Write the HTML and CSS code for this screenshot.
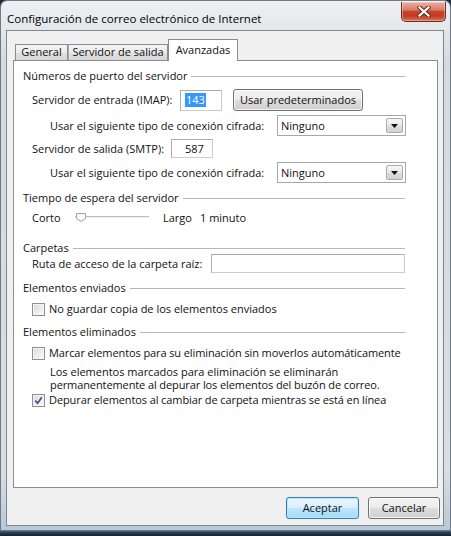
FILE: index.html
```html
<!DOCTYPE html>
<html lang="es">
<head>
<meta charset="utf-8">
<title>Configuración de correo electrónico de Internet</title>
<link rel="stylesheet" href="styles.css">
</head>
<body>
<div class="window">
  <div class="titlebar">
    <span class="title">Configuración de correo electrónico de Internet</span>
    <button class="close" aria-label="Cerrar">
      <svg width="14" height="11" viewBox="0 0 14 11">
        <path d="M2.5 1.5 L11.5 9.5 M11.5 1.5 L2.5 9.5" stroke="#6a2a20" stroke-width="4.2" stroke-linecap="square" fill="none"/>
        <path d="M2.5 1.5 L11.5 9.5 M11.5 1.5 L2.5 9.5" stroke="#ffffff" stroke-width="2.2" stroke-linecap="square" fill="none"/>
      </svg>
    </button>
  </div>
  <div class="client">
    <div class="tabs">
      <div class="tab tab-general">General</div>
      <div class="tab tab-salida">Servidor de salida</div>
      <div class="tab tab-avanzadas active">Avanzadas</div>
    </div>
    <div class="panel">
      <div class="group mt-9"><span>Números de puerto del servidor</span></div>
      <div class="row row-imap mt-7">
        <span class="label lbl-imap">Servidor de entrada (IMAP):</span>
        <span class="textbox port-imap"><span class="selected">143</span></span>
        <button class="btn btn-defaults">Usar predeterminados</button>
      </div>
      <div class="row sub row-combo mt-4">
        <span class="label">Usar el siguiente tipo de conexión cifrada:</span>
        <span class="combo">
          <span class="combo-value">Ninguno</span>
          <span class="combo-arrow">
            <svg width="7" height="4" viewBox="0 0 7 4"><path d="M0 0 H7 L3.5 4 Z" fill="#111"/></svg>
          </span>
        </span>
      </div>
      <div class="row row-smtp mt-3">
        <span class="label lbl-smtp">Servidor de salida (SMTP):</span>
        <span class="textbox port-smtp">587</span>
      </div>
      <div class="row sub row-combo mt-4">
        <span class="label">Usar el siguiente tipo de conexión cifrada:</span>
        <span class="combo">
          <span class="combo-value">Ninguno</span>
          <span class="combo-arrow">
            <svg width="7" height="4" viewBox="0 0 7 4"><path d="M0 0 H7 L3.5 4 Z" fill="#111"/></svg>
          </span>
        </span>
      </div>

      <div class="group mt-9"><span>Tiempo de espera del servidor</span></div>
      <div class="row row-slider mt-6">
        <span class="label lbl-corto">Corto</span>
        <span class="slider">
          <svg width="74" height="16" viewBox="0 0 74 16">
            <rect x="0" y="6" width="74" height="1" fill="#bdbdbd"/>
            <rect x="0" y="7" width="74" height="1" fill="#f2f2f2"/>
            <path d="M1.5 3.5 H10.5 V8.5 L6 11.5 L1.5 8.5 Z" fill="#fbfbfb" stroke="#a3a3a3" stroke-width="1"/>
          </svg>
        </span>
        <span class="label lbl-largo">Largo</span>
        <span class="label">1 minuto</span>
      </div>

      <div class="group mt-16"><span>Carpetas</span></div>
      <div class="row row-path">
        <span class="label">Ruta de acceso de la carpeta raíz:</span>
        <span class="textbox path-box"></span>
      </div>

      <div class="group mt-9"><span>Elementos enviados</span></div>
      <div class="row row-check mt-7">
        <span class="check"></span>
        <span class="label">No guardar copia de los elementos enviados</span>
      </div>

      <div class="group mt-9"><span>Elementos eliminados</span></div>
      <div class="row row-check mt-7">
        <span class="check"></span>
        <span class="label long">Marcar elementos para su eliminación sin moverlos automáticamente</span>
      </div>
      <div class="note mt-4">
        <div class="note-line">Los elementos marcados para eliminación se eliminarán</div>
        <div class="note-line long">permanentemente al depurar los elementos del buzón de correo.</div>
      </div>
      <div class="row row-check mt-1">
        <span class="check checked">
          <svg width="9" height="9" viewBox="0 0 9 9"><path d="M1.3 4.6 L3.6 7.2 L7.8 1.3" stroke="#3d5089" stroke-width="1.7" fill="none"/></svg>
        </span>
        <span class="label long">Depurar elementos al cambiar de carpeta mientras se está en línea</span>
      </div>
    </div>
    <div class="footer">
      <button class="btn btn-primary">Aceptar</button>
      <button class="btn">Cancelar</button>
    </div>
  </div>
</div>
<div class="desktop"></div>
</body>
</html>
```

FILE: styles.css
```css
* { box-sizing: border-box; }

html, body { margin: 0; padding: 0; }

body {
  width: 451px;
  height: 536px;
  overflow: hidden;
  display: flex;
  flex-direction: column;
  font-family: "Open Sans", "Noto Sans", "DejaVu Sans", sans-serif;
  font-size: 11px;
  color: #111;
  background: #1c2d40;
}

/* ---------- window frame ---------- */
.window {
  height: 530px;
  flex: none;
  display: flex;
  flex-direction: column;
  border: 1px solid #6f7a86;
  border-bottom: none;
  border-radius: 7px 7px 0 0;
  padding: 0 6px 4px 5px;
  background: linear-gradient(180deg, #eef0f2 0, #e5e8eb 26px, #d5dade 60px, #d9dee3 470px, #b8c8d6 100%);
}

.desktop {
  flex: 1;
  background: linear-gradient(180deg, #6b88a2 0, #2a3f55 40%, #15222f 100%);
}

.titlebar {
  height: 29px;
  flex: none;
  display: flex;
  align-items: flex-start;
}

.title {
  padding: 10px 0 0 1px;
  font-size: 11.5px;
  line-height: 16px;
  color: #000;
}

.close {
  margin: 1px -2px 0 auto;
  width: 45px;
  height: 20px;
  padding: 0;
  border: 1px solid #6b2d25;
  border-top: none;
  border-radius: 0 0 5px 5px;
  background: linear-gradient(180deg, #eab0a3 0, #dc7b66 42%, #c8432c 50%, #c23b23 72%, #d7735b 100%);
  box-shadow: inset 0 0 0 1px rgba(255, 255, 255, 0.35);
  display: flex;
  align-items: center;
  justify-content: center;
}

/* ---------- client area ---------- */
.client {
  flex: 1;
  display: flex;
  flex-direction: column;
  background: #f0f0f0;
  border: 1px solid #7e8690;
}

.tabs {
  flex: none;
  display: flex;
  align-items: flex-end;
  height: 21px;
  margin: 8px 0 0 8px;
}

.tab {
  height: 16px;
  border: 1px solid #898c95;
  border-bottom: none;
  background: linear-gradient(180deg, #f4f4f4 0, #ebebeb 50%, #dfdfdf 51%, #d7d7d7 100%);
  text-align: center;
  line-height: 14px;
  white-space: nowrap;
}

.tab-general { width: 53px; }
.tab-salida { width: 100px; border-left-color: #a9acb3; }

.tab.active {
  width: 70px;
  height: 22px;
  margin-bottom: -1px;
  padding-top: 3px;
  background: #fff;
  position: relative;
  z-index: 1;
}

.panel {
  flex: none;
  width: 425px;
  height: 428px;
  margin-left: 6px;
  padding: 0 31px 0 9px;
  background: #fff;
  border: 1px solid #898c95;
}

/* ---------- group headers ---------- */
.group {
  display: flex;
  align-items: center;
  height: 12px;
  line-height: 12px;
  white-space: nowrap;
}

.group::after {
  content: "";
  flex: 1;
  height: 1px;
  margin: 0 1px 0 4px;
  background: #b7b7b7;
}

/* ---------- rows ---------- */
.row {
  display: flex;
  align-items: center;
  padding-left: 9px;
  white-space: nowrap;
}

.row.sub { padding-left: 27px; }

.mt-1 { margin-top: 1px; }
.mt-3 { margin-top: 3px; }
.mt-4 { margin-top: 4px; }
.mt-6 { margin-top: 6px; }
.mt-7 { margin-top: 7px; }
.mt-9 { margin-top: 9px; }
.mt-16 { margin-top: 16px; }

.row-imap { height: 22px; }
.row-combo { height: 21px; }
.row-smtp { height: 19px; }
.row-slider { height: 16px; }
.row-path { height: 19px; }
.row-check { height: 16px; }

.label { line-height: 14px; }
.long { letter-spacing: -0.1px; }
.lbl-imap { width: 148px; flex: none; }
.lbl-smtp { width: 139px; flex: none; }
.lbl-corto { width: 43px; flex: none; }
.lbl-largo { width: 37px; flex: none; }

/* ---------- controls ---------- */
.textbox {
  flex: none;
  display: flex;
  align-items: center;
  height: 21px;
  background: #fff;
  border: 1px solid #abadb3;
  border-right-color: #c8ccd2;
  border-bottom-color: #c8ccd2;
  line-height: 14px;
}

.port-imap {
  width: 42px;
  padding-left: 4px;
  margin-right: 11px;
}

.port-smtp {
  width: 42px;
  height: 19px;
  padding-left: 13px;
}

.path-box {
  width: 194px;
  height: 19px;
  margin-left: auto;
  margin-right: 1px;
}

.selected {
  background: #3399ff;
  color: #fff;
  padding: 0 1px;
}

.combo {
  flex: none;
  margin-left: auto;
  width: 129px;
  height: 21px;
  display: flex;
  align-items: center;
  padding-left: 3px;
  background: #fff;
  border: 1px solid #a5a7ad;
}

.combo-value { line-height: 14px; }

.combo-arrow {
  margin-left: auto;
  margin-right: 2px;
  width: 17px;
  height: 15px;
  display: flex;
  align-items: center;
  justify-content: center;
  border: 1px solid #a7a9ae;
  border-radius: 2px;
  background: linear-gradient(180deg, #f7f7f7 0, #e9e9e9 50%, #dcdcdc 51%, #d4d4d4 100%);
}

.slider {
  flex: none;
  width: 74px;
  height: 16px;
  margin-right: 14px;
}

.slider svg { display: block; }

.check {
  flex: none;
  width: 13px;
  height: 13px;
  margin-right: 4px;
  display: flex;
  align-items: center;
  justify-content: center;
  border: 1px solid #8e8f8f;
  background: linear-gradient(135deg, #d9d9d9 0, #ededed 55%, #fafafa 100%);
  box-shadow: inset 0 0 0 1px #f6f6f6;
}

.note {
  padding-left: 27px;
  white-space: nowrap;
}

.note-line {
  height: 13px;
  line-height: 13px;
}

/* ---------- buttons ---------- */
.btn {
  flex: none;
  height: 22px;
  padding: 0;
  font: inherit;
  color: #111;
  border: 1px solid #707070;
  border-radius: 3px;
  background: linear-gradient(180deg, #f3f3f3 0, #ebebeb 48%, #dddddd 50%, #cfcfcf 100%);
  box-shadow: inset 0 0 0 1px rgba(255, 255, 255, 0.75);
  text-align: center;
  line-height: 18px;
}

.btn-defaults { width: 130px; }

.footer {
  flex: none;
  display: flex;
  justify-content: flex-end;
  gap: 9px;
  margin-top: 9px;
  padding-right: 3px;
}

.footer .btn { width: 73px; }
.footer .btn:last-child { width: 72px; }

.btn-primary {
  border-color: #3c7fb1;
  background: linear-gradient(180deg, #eaf6fd 0, #d9f0fc 48%, #bee6fd 50%, #a7d9f5 100%);
  box-shadow: inset 0 0 0 1px rgba(180, 230, 250, 0.9), 0 0 1px #7fd2f2;
}
```
